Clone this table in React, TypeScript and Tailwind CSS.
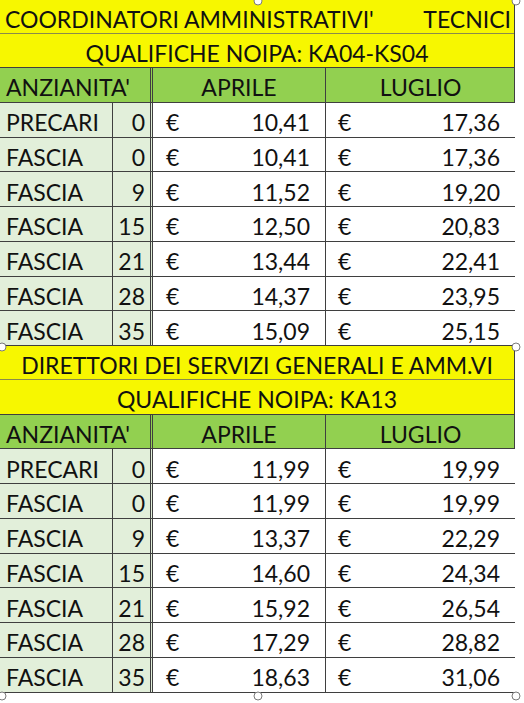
import React from "react";

type Row = { label: string; n: string; apr: string; lug: string };

const sectionA: Row[] = [
  { label: "PRECARI", n: "0", apr: "10,41", lug: "17,36" },
  { label: "FASCIA", n: "0", apr: "10,41", lug: "17,36" },
  { label: "FASCIA", n: "9", apr: "11,52", lug: "19,20" },
  { label: "FASCIA", n: "15", apr: "12,50", lug: "20,83" },
  { label: "FASCIA", n: "21", apr: "13,44", lug: "22,41" },
  { label: "FASCIA", n: "28", apr: "14,37", lug: "23,95" },
  { label: "FASCIA", n: "35", apr: "15,09", lug: "25,15" },
];

const sectionB: Row[] = [
  { label: "PRECARI", n: "0", apr: "11,99", lug: "19,99" },
  { label: "FASCIA", n: "0", apr: "11,99", lug: "19,99" },
  { label: "FASCIA", n: "9", apr: "13,37", lug: "22,29" },
  { label: "FASCIA", n: "15", apr: "14,60", lug: "24,34" },
  { label: "FASCIA", n: "21", apr: "15,92", lug: "26,54" },
  { label: "FASCIA", n: "28", apr: "17,29", lug: "28,82" },
  { label: "FASCIA", n: "35", apr: "18,63", lug: "31,06" },
];

// celle con testo un po' in basso, come in Excel
const grid = "grid grid-cols-[113px_40px_173px_189px] h-[34.75px] border-b border-[#3f3f3f]";
const cell = "flex items-center pt-[6px]";

function Header() {
  return (
    <div className={`${grid} bg-[#92d050]`}>
      <div className={`${cell} col-span-2 pl-[6px] border-r-[3px] border-double border-[#3f3f3f]`}>ANZIANITA'</div>
      <div className={`${cell} justify-center border-r border-[#3f3f3f]`}>APRILE</div>
      <div className={`${cell} justify-center`}>LUGLIO</div>
    </div>
  );
}

function DataRow({ r }: { r: Row }) {
  return (
    <div className={grid}>
      <div className={`${cell} pl-[6px] bg-[#e2efda] border-r border-[#3f3f3f]`}>{r.label}</div>
      <div className={`${cell} justify-end pr-[5px] bg-[#e2efda] border-r-[3px] border-double border-[#3f3f3f]`}>{r.n}</div>
      <div className={`${cell} justify-between pl-[13px] pr-[15px] bg-white border-r border-[#3f3f3f]`}>
        <span>€</span>
        <span>{r.apr}</span>
      </div>
      <div className={`${cell} justify-between pl-[12px] pr-[15px] bg-white`}>
        <span>€</span>
        <span>{r.lug}</span>
      </div>
    </div>
  );
}

function Handle({ cls }: { cls: string }) {
  return <div className={`absolute w-[9px] h-[9px] rounded-full bg-white border border-[#7a7a7a] -translate-x-1/2 -translate-y-1/2 ${cls}`} />;
}

export default function App() {
  return (
    <div className="relative w-[524px] h-[703px] bg-white overflow-hidden text-[#111] text-[23px] leading-none font-['Lato','Open_Sans',sans-serif]">
      <div className="w-[515px] border-r border-[#3f3f3f]">
        {/* sezione 1 */}
        <div className="h-[34px] pt-[6px] bg-[#f7f700] border-b border-[#8a8a4a] flex items-center justify-between pl-[5px] pr-[3px]">
          <span>COORDINATORI AMMINISTRATIVI'</span>
          <span>TECNICI</span>
        </div>
        <div className="h-[34px] pt-[6px] bg-[#f7f700] border-b border-[#3f3f3f] flex items-center justify-center">QUALIFICHE NOIPA: KA04-KS04</div>
        <Header />
        {sectionA.map((r, i) => (
          <DataRow key={"a" + i} r={r} />
        ))}

        {/* sezione 2 */}
        <div className="h-[34px] pt-[6px] bg-[#f7f700] border-b border-[#8a8a4a] flex items-center justify-center">DIRETTORI DEI SERVIZI GENERALI E AMM.VI</div>
        <div className="h-[34.5px] pt-[6px] bg-[#f7f700] border-b border-[#3f3f3f] flex items-center justify-center">QUALIFICHE NOIPA: KA13</div>
        <Header />
        {sectionB.map((r, i) => (
          <DataRow key={"b" + i} r={r} />
        ))}
      </div>

      <Handle cls="left-[258px] top-[1px]" />
      <Handle cls="left-[516px] top-[1px]" />
      <Handle cls="left-[2px] top-[347px]" />
      <Handle cls="left-[516px] top-[347px]" />
      <Handle cls="left-[2px] top-[696px]" />
      <Handle cls="left-[258px] top-[696px]" />
      <Handle cls="left-[516px] top-[696px]" />
    </div>
  );
}
